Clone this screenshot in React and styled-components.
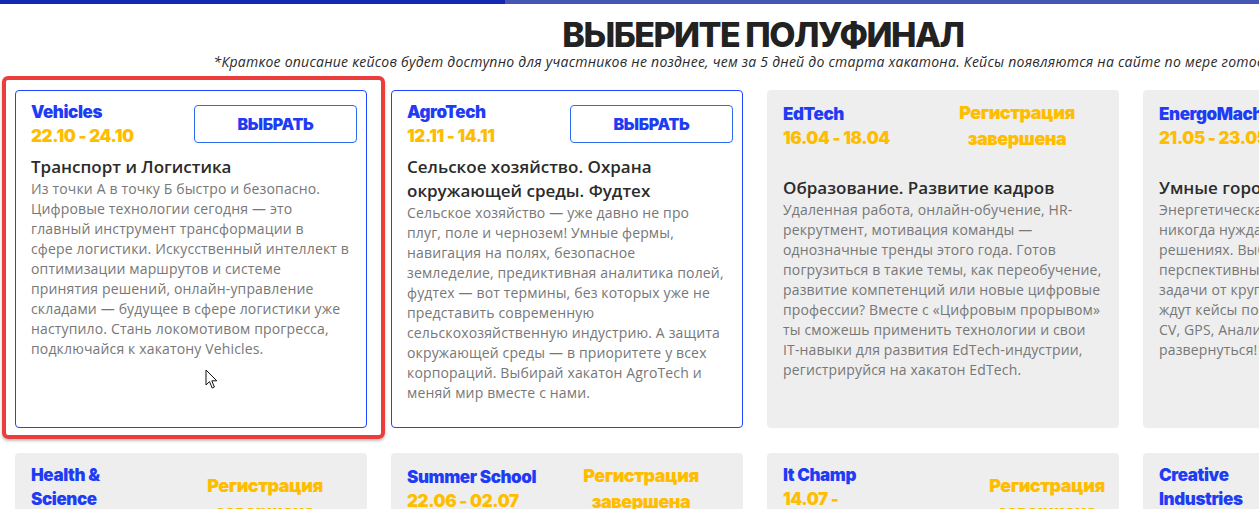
import React from "react";
import styled, { createGlobalStyle } from "styled-components";

const GlobalStyle = createGlobalStyle`
  html, body { margin: 0; padding: 0; background: #fff; overflow: hidden; }
  body { font-family: "Open Sans", "Noto Sans", sans-serif; }
  * { box-sizing: border-box; }
`;

const Page = styled.div`
  position: relative;
  width: 1526px;
`;

const TopBar = styled.div`
  display: flex;
  height: 4px;
`;

const BarSegment = styled.div`
  width: ${(p) => p.$w};
  flex: ${(p) => (p.$grow ? 1 : "none")};
  background: ${(p) => p.$c};
`;

const Hero = styled.header`
  padding-top: 13px;
  text-align: center;
`;

const Title = styled.h1`
  margin: 0;
  font-family: Inter, "Liberation Sans", sans-serif;
  font-weight: 800;
  font-size: 34px;
  line-height: 35px;
  letter-spacing: -1.5px;
  color: #222;
`;

const Note = styled.p`
  margin: 0;
  font-family: "Open Sans", sans-serif;
  font-style: italic;
  font-size: 14px;
  line-height: 20px;
  letter-spacing: 0.25px;
  color: #2a2a2a;
  white-space: nowrap;
`;

const Grid = styled.section`
  display: grid;
  grid-template-columns: repeat(4, 352px);
  column-gap: 24px;
  row-gap: 25px;
  padding: 18px 0 0 15px;
`;

const Card = styled.article`
  display: flex;
  flex-direction: column;
  border-radius: 4px;
  background: ${(p) => (p.$open ? "#fff" : "#eeeeee")};
  border: ${(p) => (p.$open ? "1px solid #1f45ff" : "none")};
  padding: ${(p) => (p.$open ? "9px 15px 24px" : "10px 16px 24px")};
`;

const CardHead = styled.div`
  display: flex;
  align-items: center;
  justify-content: space-between;
  margin: 0 -6px ${(p) => p.$gap}px 0;
`;

const NameBlock = styled.div`
  font-family: Inter, "Liberation Sans", sans-serif;
  font-weight: 900;
  font-size: 17px;
  line-height: 24px;
  letter-spacing: -0.4px;
  white-space: pre-line;
`;

const Name = styled.div`
  color: #1f3cf5;
`;

const Dates = styled.div`
  color: #ffbd00;
`;

const SelectButton = styled.button`
  flex: none;
  width: 163px;
  height: 38px;
  border: 1px solid #2d6bf0;
  border-radius: 4px;
  background: #fff;
  color: #1f3cf5;
  font-family: Inter, "Liberation Sans", sans-serif;
  font-weight: 900;
  font-size: 16px;
  letter-spacing: -0.3px;
  cursor: pointer;
`;

const Status = styled.div`
  flex: none;
  width: ${(p) => p.$w}px;
  text-align: center;
  font-family: Inter, "Liberation Sans", sans-serif;
  font-weight: 900;
  font-size: 18px;
  line-height: 26px;
  letter-spacing: -0.5px;
  color: #ffbd00;
`;

const Heading = styled.h3`
  margin: 0;
  font-family: "Open Sans", sans-serif;
  font-weight: 600;
  font-size: 17px;
  line-height: 24px;
  color: #2b2b2b;
`;

const Body = styled.p`
  margin: 0;
  font-family: "Open Sans", sans-serif;
  font-size: 14px;
  line-height: 20px;
  letter-spacing: 0.15px;
  color: #777;
  white-space: ${(p) => (p.$pre ? "pre-line" : "normal")};
`;

const Highlight = styled.div`
  position: absolute;
  left: 2px;
  top: 76px;
  width: 383px;
  height: 363px;
  border: 4px solid #ec3d3d;
  border-radius: 6px;
  box-shadow: 0 2px 3px rgba(0, 0, 0, 0.25);
  pointer-events: none;
`;

const Pointer = styled.svg`
  position: absolute;
  left: 205px;
  top: 369px;
`;

const NB = "\u00A0";

const cards = [
  {
    open: true,
    name: "Vehicles",
    dates: "22.10 - 24.10",
    title: "Транспорт и Логистика",
    text: `Из точки А в точку Б быстро и безопасно. Цифровые технологии сегодня — это главный инструмент трансформации в сфере${NB}логистики. Искусственный интеллект в оптимизации маршрутов и системе принятия решений, онлайн-управление складами — будущее в сфере логистики уже наступило. Стань локомотивом прогресса, подключайся к хакатону Vehicles.`,
  },
  {
    open: true,
    name: "AgroTech",
    dates: "12.11 - 14.11",
    title: "Сельское хозяйство. Охрана окружающей среды. Фудтех",
    text: `Сельское хозяйство — уже давно не про плуг, поле и чернозем! Умные фермы, навигация на полях, безопасное земледелие,${NB}предиктивная аналитика полей, фудтех — вот термины, без которых уже не представить современную сельскохозяйственную индустрию. А защита окружающей среды — в приоритете у всех корпораций. Выбирай хакатон AgroTech и меняй мир вместе с нами.`,
  },
  {
    name: "EdTech",
    dates: "16.04 - 18.04",
    title: "Образование. Развитие кадров",
    text:
      "Удаленная работа, онлайн-обучение, HR-рекрутмент, мотивация команды — однозначные тренды этого года. Готов погрузиться в такие темы, как переобучение, развитие компетенций или новые цифровые профессии? Вместе с «Цифровым прорывом» ты сможешь применить технологии и свои IT-навыки для развития EdTech-индустрии, регистрируйся на хакатон EdTech.",
  },
  {
    name: "EnergoMach",
    dates: "21.05 - 23.05",
    title: "Умные города. Энергетика",
    pre: true,
    text:
      "Энергетическая отрасль как\nникогда нуждается в цифровых\nрешениях. Выбирай самые\nперспективные направления и\nзадачи от крупнейших компаний. Тебя\nждут кейсы по IoT, Big Data, ML,\nCV, GPS, Аналитике — есть где\nразвернуться!",
  },
  {
    name: "Health &\nScience",
    dates: "10.06 - 12.06",
    title: "Здравоохранение и наука",
    text: "",
  },
  {
    name: "Summer School",
    dates: "22.06 - 02.07",
    title: "Летняя школа",
    text: "",
  },
  {
    name: "It Champ",
    dates: "14.07 -\n16.07",
    statusWidth: 124,
    title: "Чемпионат",
    text: "",
  },
  {
    name: "Creative\nIndustries",
    dates: "28.07 - 30.07",
    title: "Креативные индустрии",
    text: "",
  },
];

function CursorIcon() {
  return (
    <Pointer width="14" height="21" viewBox="0 0 14 21">
      <path
        d="M1 1 L1 16 L4.5 12.6 L7.2 19 L9.4 18 L6.8 11.8 L11.8 11.8 Z"
        fill="#fff"
        stroke="#111"
        strokeWidth="1"
        strokeLinejoin="miter"
      />
    </Pointer>
  );
}

function HackCard({ card }) {
  return (
    <Card $open={card.open}>
      <CardHead $gap={card.open ? 7 : 24}>
        <NameBlock>
          <Name>{card.name}</Name>
          <Dates>{card.dates}</Dates>
        </NameBlock>
        {card.open ? (
          <SelectButton>ВЫБРАТЬ</SelectButton>
        ) : (
          <Status $w={card.statusWidth || 184}>Регистрация завершена</Status>
        )}
      </CardHead>
      <Heading>{card.title}</Heading>
      {card.text && <Body $pre={card.pre}>{card.text}</Body>}
    </Card>
  );
}

export default function App() {
  return (
    <>
      <GlobalStyle />
      <Page>
        <TopBar>
          <BarSegment $w="505px" $c="#1428b2" />
          <BarSegment $grow $c="#4656b4" />
        </TopBar>
        <Hero>
          <Title>ВЫБЕРИТЕ ПОЛУФИНАЛ</Title>
          <Note>
            *Краткое описание кейсов будет доступно для участников не позднее, чем за 5 дней до старта хакатона. Кейсы появляются на сайте по мере готовности.
          </Note>
        </Hero>
        <Grid>
          {cards.map((c) => (
            <HackCard key={c.name} card={c} />
          ))}
        </Grid>
        <Highlight />
        <CursorIcon />
      </Page>
    </>
  );
}
